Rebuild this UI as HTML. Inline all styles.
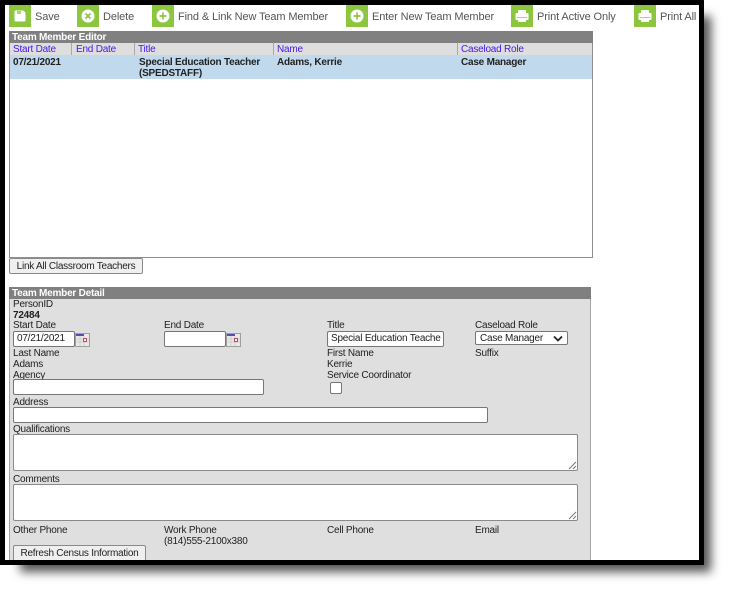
<!DOCTYPE html>
<html>
<head>
<meta charset="utf-8">
<style>
html,body{margin:0;padding:0;background:#fff;}
#root{position:relative;width:729px;height:590px;overflow:hidden;background:#fff;font-family:"Liberation Sans",Arial,sans-serif;font-size:10px;letter-spacing:-.22px;color:#222;}
#shadow{position:absolute;left:20px;top:16px;width:691px;height:556px;background:#555;filter:blur(5px);}
#frame{position:absolute;left:0;top:0;width:704px;height:565px;background:#000;}
#page{position:absolute;left:5px;top:5px;width:694px;height:555px;background:#fff;overflow:hidden;}
#wrap{position:absolute;left:-5px;top:-5px;width:729px;height:590px;filter:blur(.35px);}
.a{position:absolute;white-space:nowrap;line-height:11px;margin-top:1px;}
.ic{position:absolute;top:5px;width:22px;height:22px;background:#8cc63f;}
.ic svg{position:absolute;left:0;top:0;}
.tb{position:absolute;top:10px;font-size:11px;letter-spacing:-.12px;line-height:13px;margin-top:1px;color:#555;white-space:nowrap;}
.hd{position:absolute;background:#808080;color:#fff;font-weight:bold;font-size:10px;line-height:14px;padding-left:3px;box-sizing:border-box;overflow:hidden;}
.col{position:absolute;top:43px;height:12px;background:#dedede;border-right:1px solid #a8a8a8;box-sizing:border-box;color:#4a19f0;font-size:10px;line-height:14px;padding-left:3px;white-space:nowrap;overflow:hidden;}
.b{font-weight:bold;}
.inp{position:absolute;box-sizing:border-box;background:#fff;border:1px solid #777;border-radius:2px;font-size:10px;line-height:14px;color:#222;white-space:nowrap;overflow:hidden;}
.ta{position:absolute;box-sizing:border-box;background:#fff;border:1px solid #8a8a8a;border-radius:2px;}
.ta svg{position:absolute;right:0;bottom:0;}
.btn{position:absolute;box-sizing:border-box;background:#efefef;border:1px solid #8a8a8a;border-radius:2px;font-size:10px;letter-spacing:-.25px;text-align:center;color:#222;white-space:nowrap;}
.cal{position:absolute;width:15px;height:14px;}
</style>
</head>
<body>
<div id="root">
<div id="shadow"></div>
<div id="frame"></div>
<div id="page">
<div id="wrap">

<div class="ic" style="left:9px"><svg width="22" height="22"><path d="M6.500 5.500h8l2 2v8q0 1-1 1h-9q-1 0-1-1v-9q0-1 1-1z" fill="#fff"/><rect x="8" y="6" width="4" height="3" fill="#a9d46e"/></svg></div>
<div class="tb" style="left:35px">Save</div>
<div class="ic" style="left:77px"><svg width="22" height="22"><circle cx="11" cy="11" r="6.500" fill="#fff"/><path d="M8.500 8.500l5 5M13.500 8.500l-5 5" stroke="#8cc63f" stroke-width="1.700"/></svg></div>
<div class="tb" style="left:103px">Delete</div>
<div class="ic" style="left:152px"><svg width="22" height="22"><circle cx="11" cy="11" r="6.500" fill="#fff"/><path d="M11 7.500v7M7.500 11h7" stroke="#8cc63f" stroke-width="1.700"/></svg></div>
<div class="tb" style="left:178px">Find &amp; Link New Team Member</div>
<div class="ic" style="left:346px"><svg width="22" height="22"><circle cx="11" cy="11" r="6.500" fill="#fff"/><path d="M11 7.500v7M7.500 11h7" stroke="#8cc63f" stroke-width="1.700"/></svg></div>
<div class="tb" style="left:372px">Enter New Team Member</div>
<div class="ic" style="left:511px"><svg width="22" height="22"><path d="M7 8V6q0-1 1-1h6q1 0 1 1v2h1.500q1 0 1 1v5q0 1-1 1H15v1.500q0 .5-1 .5H8q-1 0-1-.5V15H5.500q-1 0-1-1V9q0-1 1-1z" fill="#fff"/><path d="M6 12.500h10" stroke="#a9d46e"/></svg></div>
<div class="tb" style="left:537px">Print Active Only</div>
<div class="ic" style="left:634px"><svg width="22" height="22"><path d="M7 8V6q0-1 1-1h6q1 0 1 1v2h1.500q1 0 1 1v5q0 1-1 1H15v1.500q0 .5-1 .5H8q-1 0-1-.5V15H5.500q-1 0-1-1V9q0-1 1-1z" fill="#fff"/><path d="M6 12.500h10" stroke="#a9d46e"/></svg></div>
<div class="tb" style="left:660px">Print All</div>

<!-- editor -->
<div style="position:absolute;left:9px;top:31px;width:583.500px;height:227px;box-sizing:border-box;border:1px solid #8f8f8f;background:#fff;"></div>
<div class="hd" style="left:9px;top:31px;width:583.500px;height:12px;">Team Member Editor</div>
<div class="col" style="left:10px;width:62px;">Start Date</div>
<div class="col" style="left:72px;width:63px;padding-left:4px;">End Date</div>
<div class="col" style="left:135px;width:139px;">Title</div>
<div class="col" style="left:274px;width:184px;">Name</div>
<div class="col" style="left:458px;width:134px;border-right:0;">Caseload Role</div>
<div style="position:absolute;left:10px;top:55px;width:582px;height:24px;background:#c1d9ec;"></div>
<div class="a b" style="left:13px;top:56px;">07/21/2021</div>
<div class="a b" style="left:139px;top:56px;">Special Education Teacher<br>(SPEDSTAFF)</div>
<div class="a b" style="left:277px;top:56px;">Adams, Kerrie</div>
<div class="a b" style="left:461px;top:56px;">Case Manager</div>

<div class="btn" style="left:9px;top:258px;width:134px;height:16px;line-height:15px;">Link All Classroom Teachers</div>

<!-- detail -->
<div style="position:absolute;left:9px;top:287px;width:582px;height:280px;box-sizing:border-box;border:1px solid #a5a5a5;background:#dfdfdf;"></div>
<div class="hd" style="left:9px;top:287px;width:582px;height:12px;">Team Member Detail</div>

<div class="a" style="left:13px;top:298px;">PersonID</div>
<div class="a b" style="left:13px;top:309px;">72484</div>
<div class="a" style="left:13px;top:319px;">Start Date</div>
<div class="inp" style="left:13px;top:331px;width:62px;height:16px;padding:0 0 0 3px;">07/21/2021</div>
<svg class="cal" style="left:75px;top:333px" width="15" height="14"><rect x=".5" y=".5" width="14" height="13" fill="#e9e9e9" stroke="#a0a0a0"/><rect x="1" y="1" width="8" height="2" fill="#5252a8"/><path d="M1 6h13M1 9h13M5 3v10M9 3v10" stroke="#cfcfcf"/><rect x="8.500" y="5.500" width="3" height="3" fill="#eee" stroke="#b85060"/></svg>
<div class="a" style="left:164px;top:319px;">End Date</div>
<div class="inp" style="left:164px;top:331px;width:62px;height:16px;"></div>
<svg class="cal" style="left:226px;top:333px" width="15" height="14"><rect x=".5" y=".5" width="14" height="13" fill="#e9e9e9" stroke="#a0a0a0"/><rect x="1" y="1" width="8" height="2" fill="#5252a8"/><path d="M1 6h13M1 9h13M5 3v10M9 3v10" stroke="#cfcfcf"/><rect x="8.500" y="5.500" width="3" height="3" fill="#eee" stroke="#b85060"/></svg>
<div class="a" style="left:327px;top:319px;">Title</div>
<div class="inp" style="left:327px;top:331px;width:117px;height:16px;padding:0 0 0 3px;">Special Education Teache</div>
<div class="a" style="left:475px;top:319px;">Caseload Role</div>
<div class="inp" style="left:475px;top:331px;width:93px;height:14px;padding:0 0 0 4px;line-height:13px;">Case Manager<svg style="position:absolute;right:4px;top:3px" width="10" height="7"><path d="M1 1.500l4 4 4-4" fill="none" stroke="#222" stroke-width="1.800"/></svg></div>

<div class="a" style="left:13px;top:347px;">Last Name</div>
<div class="a" style="left:13px;top:358px;">Adams</div>
<div class="a" style="left:327px;top:347px;">First Name</div>
<div class="a" style="left:327px;top:358px;">Kerrie</div>
<div class="a" style="left:475px;top:347px;">Suffix</div>
<div class="a" style="left:13px;top:369px;">Agency</div>
<div class="a" style="left:327px;top:369px;">Service Coordinator</div>
<div class="inp" style="left:13px;top:379px;width:251px;height:16px;"></div>
<div class="inp" style="left:330px;top:382px;width:12px;height:12px;border-radius:2px;"></div>
<div class="a" style="left:13px;top:396px;">Address</div>
<div class="inp" style="left:13px;top:407px;width:475px;height:16px;"></div>
<div class="a" style="left:13px;top:423px;">Qualifications</div>
<div class="ta" style="left:13px;top:434px;width:565px;height:37px;"><svg width="9" height="9"><path d="M1 8l7-7M5 8l3-3" stroke="#777" fill="none"/></svg></div>
<div class="a" style="left:13px;top:473px;">Comments</div>
<div class="ta" style="left:13px;top:484px;width:565px;height:37px;"><svg width="9" height="9"><path d="M1 8l7-7M5 8l3-3" stroke="#777" fill="none"/></svg></div>
<div class="a" style="left:13px;top:524px;">Other Phone</div>
<div class="a" style="left:164px;top:524px;">Work Phone</div>
<div class="a" style="left:164px;top:535px;">(814)555-2100x380</div>
<div class="a" style="left:327px;top:524px;">Cell Phone</div>
<div class="a" style="left:475px;top:524px;">Email</div>
<div class="btn" style="left:13px;top:545px;width:133px;height:20px;line-height:16px;">Refresh Census Information</div>

</div>
</div>
</div>
</body>
</html>
